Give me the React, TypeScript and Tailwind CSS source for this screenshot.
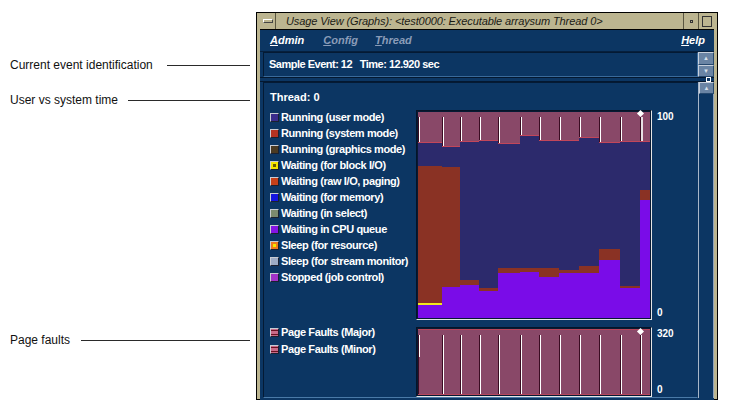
import React from "react";

type Col = { w: number; pink: number; blue: number; red: number; yellow?: number };

// y values in page pixels; the plot area runs from 112 to 318
const TOP = 112;
const BOTTOM = 318;
const cols: Col[] = [
  { w: 24, pink: 143, blue: 166, red: 303, yellow: 305 },
  { w: 18, pink: 147, blue: 167, red: 287 },
  { w: 19, pink: 142, blue: 280, red: 285 },
  { w: 19, pink: 141, blue: 288, red: 291 },
  { w: 22, pink: 144, blue: 268, red: 273 },
  { w: 19, pink: 136, blue: 268, red: 272 },
  { w: 20, pink: 141, blue: 268, red: 277 },
  { w: 20, pink: 141, blue: 270, red: 273 },
  { w: 20, pink: 138, blue: 266, red: 273 },
  { w: 21, pink: 143, blue: 249, red: 260 },
  { w: 20, pink: 142, blue: 286, red: 288 },
  { w: 10, pink: 142, blue: 190, red: 200 },
];

const legend = [
  { label: "Running (user mode)", sw: "bg-[#3a2c8c]" },
  { label: "Running (system mode)", sw: "bg-[#b43222]" },
  { label: "Running (graphics mode)", sw: "bg-[#4a3a22]" },
  { label: "Waiting (for block I/O)", sw: "bg-[#f2e400]", dot: "bg-[#6a5a00]" },
  { label: "Waiting (raw I/O, paging)", sw: "bg-[#c4401a]" },
  { label: "Waiting (for memory)", sw: "bg-[#1414e0]" },
  { label: "Waiting (in select)", sw: "bg-[#7c8a6e]" },
  { label: "Waiting in CPU queue", sw: "bg-[#8414e4]" },
  { label: "Sleep (for resource)", sw: "bg-[#f07a1c]", dot: "bg-[#f4e800]" },
  { label: "Sleep (for stream monitor)", sw: "bg-[#9cabc4]" },
  { label: "Stopped (job control)", sw: "bg-[#a232c8]" },
];

function Swatch({ sw, dot }: { sw: string; dot?: string }) {
  return (
    <span className="flex h-[9px] w-[9px] shrink-0 items-center justify-center border border-t-[#c8ccd4] border-l-[#c8ccd4] border-r-[#1a2030] border-b-[#1a2030]">
      <span className={`flex h-full w-full items-center justify-center ${sw}`}>
        {dot && <span className={`h-[3px] w-[3px] ${dot}`} />}
      </span>
    </span>
  );
}

function FaultSwatch() {
  return (
    <span className="flex h-[9px] w-[9px] shrink-0 flex-col justify-around border border-t-[#c8ccd4] border-l-[#c8ccd4] border-r-[#1a2030] border-b-[#1a2030] bg-[#c86a88]">
      <span className="h-px bg-[#6a1020]" />
      <span className="h-px bg-[#6a1020]" />
    </span>
  );
}

function Marker() {
  return <span className="absolute left-[-2px] top-[-1px] h-[5px] w-[5px] rotate-45 bg-white" />;
}

function UsageChart() {
  return (
    <div className="border-t border-l border-[#061428] border-r border-b border-r-[#e6e6e6] border-b-[#e6e6e6]">
      <div className="flex h-[208px] border border-[#071a34]">
        {cols.map((c, i) => {
          const last = c.yellow ?? c.red;
          return (
            <div key={i} className="flex flex-col" style={{ width: c.w }}>
              <div
                className="relative flex border-b border-[#c2465a] bg-[#894868] pt-[5px]"
                style={{ height: c.pink - TOP }}
              >
                <span className="w-px bg-[#3a0c22]" />
                <span className={i === 11 ? "w-[2px] bg-[#e8e0e4]" : "w-px bg-white"} />
                {i === 11 && <Marker />}
              </div>
              <div className="bg-[#2c2a6c]" style={{ height: c.blue - c.pink }} />
              <div className="bg-[#8a3224]" style={{ height: c.red - c.blue }} />
              {c.yellow && <div className="bg-[#f2e81c]" style={{ height: c.yellow - c.red }} />}
              <div className="bg-[#7a0ce8]" style={{ height: BOTTOM - last }} />
            </div>
          );
        })}
      </div>
    </div>
  );
}

function FaultChart() {
  return (
    <div className="border-t border-l border-[#061428] border-r border-b border-r-[#e6e6e6] border-b-[#e6e6e6]">
      <div className="flex h-[68px] border border-[#071a34]">
        {cols.map((c, i) => (
          <div
            key={i}
            className="relative flex border-y border-[#b8465c] bg-[#894868] pt-[5px]"
            style={{ width: c.w }}
          >
            <span className="w-px bg-[#3a0c22]" />
            <span className={i === 0 ? "h-[22px] w-px bg-white" : "w-px bg-white"} />
            {i === 11 && <Marker />}
          </div>
        ))}
      </div>
    </div>
  );
}

function Annotation({ text, gap, className }: { text: string; gap: string; className: string }) {
  return (
    <div className={`flex h-[16px] items-center ${className}`}>
      <span className="whitespace-nowrap text-[12px] text-[#111]">{text}</span>
      <span className={`h-px flex-1 bg-[#2a2a2a] ${gap}`} />
    </div>
  );
}

export default function App() {
  return (
    <div className="flex h-[410px] w-[729px] overflow-hidden bg-white font-['Liberation_Sans',Arial,sans-serif]">
      {/* callouts */}
      <div className="flex w-[256px] shrink-0 flex-col pl-[10px] pr-[6px] pt-[57px]">
        <Annotation text="Current event identification" gap="ml-[14px]" className="" />
        <Annotation text="User vs system time" gap="ml-[10px]" className="mt-[19px]" />
        <Annotation text="Page faults" gap="ml-[11px]" className="mt-[224px]" />
      </div>

      {/* window */}
      <div className="mt-[12px] flex h-[388px] w-[462px] shrink-0 flex-col border border-black bg-[#bcb590] px-[3px]">
        {/* title bar */}
        <div className="flex h-[17px] shrink-0 items-stretch border-b border-black">
          <div className="flex w-[16px] items-center justify-center border-r border-[#5a5640]">
            <span className="h-[4px] w-[10px] border border-t-white border-l-white border-b-[#444] border-r-[#444]" />
          </div>
          <div className="flex flex-1 items-center pl-[10px] text-[11px] italic tracking-[-0.1px] text-[#1a1a14]">
            Usage View (Graphs): &lt;test0000: Executable arraysum Thread 0&gt;
          </div>
          <div className="flex w-[15px] items-center justify-center border-l border-[#5a5640]">
            <span className="h-[3px] w-[3px] border border-[#333]" />
          </div>
          <div className="flex w-[16px] items-center justify-center border-l border-[#5a5640]">
            <span className="h-[11px] w-[10px] border border-[#333]" />
          </div>
        </div>

        {/* client area */}
        <div className="flex flex-1 flex-col bg-[#0c3663]">
          {/* menu bar */}
          <div className="flex h-[21px] shrink-0 items-center pl-[10px] pr-[9px] text-[11px] font-bold italic">
            <span className="text-white">
              <span className="underline">A</span>dmin
            </span>
            <span className="ml-[19px] text-[#8a9cb8]">
              <span className="underline">C</span>onfig
            </span>
            <span className="ml-[17px] text-[#8a9cb8]">
              <span className="underline">T</span>hread
            </span>
            <span className="ml-auto text-white">
              <span className="underline">H</span>elp
            </span>
          </div>

          {/* current event */}
          <div className="flex h-[26px] shrink-0 items-stretch border-t border-[#06203e] pl-[3px]">
            <div className="flex flex-1 items-center border border-t-[#041a34] border-l-[#041a34] border-b-[#3a6a9a] border-r-[#3a6a9a] pl-[5px] text-[11px] font-bold tracking-[-0.5px] text-white">
              Sample Event: 12&nbsp;&nbsp; Time: 12.920 sec
            </div>
            <div className="flex w-[16px] flex-col">
              <div className="flex flex-1 items-center justify-center border border-t-[#c8d0dc] border-l-[#c8d0dc] border-b-[#26486e] border-r-[#26486e] bg-[#6a84a4] text-[6px] leading-none text-[#d8e0ea]">
                ▲
              </div>
              <div className="flex flex-1 items-center justify-center border border-t-[#c8d0dc] border-l-[#c8d0dc] border-b-[#26486e] border-r-[#26486e] bg-[#6a84a4] text-[6px] leading-none text-[#d8e0ea]">
                ▼
              </div>
            </div>
          </div>

          {/* sash */}
          <div className="flex h-[5px] shrink-0 items-center justify-end border-y border-[#041830] pr-[3px]">
            <span className="h-[5px] w-[5px] border border-white" />
          </div>

          {/* graphs pane */}
          <div className="flex flex-1 items-stretch pb-[2px] pl-[3px]">
            <div className="flex flex-1 flex-col border border-t-[#041a34] border-l-[#041a34] border-b-[#4a7aa8] border-r-transparent pl-[6px] pt-[7px]">
              <div className="h-[14px] text-[11px] font-bold leading-[14px] text-white">Thread: 0</div>
              <div className="mt-[6px] flex items-start">
                <div className="-mt-px flex w-[146px] shrink-0 flex-col">
                  {legend.map((l) => (
                    <div key={l.label} className="flex h-[16px] items-center gap-[2px]">
                      <Swatch sw={l.sw} dot={l.dot} />
                      <span className="whitespace-nowrap text-[11px] font-bold tracking-[-0.4px] text-white">
                        {l.label}
                      </span>
                    </div>
                  ))}
                </div>
                <UsageChart />
                <div className="flex h-[210px] flex-col justify-between pb-px pl-[5px] pt-px text-[10px] font-bold leading-[12px] text-white">
                  <span>100</span>
                  <span>0</span>
                </div>
              </div>
              <div className="mt-[7px] flex items-start">
                <div className="-mt-[3px] flex w-[146px] shrink-0 flex-col">
                  {["Page Faults (Major)", "Page Faults (Minor)"].map((t) => (
                    <div key={t} className="flex h-[17px] items-center gap-[2px]">
                      <FaultSwatch />
                      <span className="whitespace-nowrap text-[11px] font-bold tracking-[-0.4px] text-white">
                        {t}
                      </span>
                    </div>
                  ))}
                </div>
                <FaultChart />
                <div className="flex h-[70px] flex-col justify-between pb-px pl-[5px] pt-px text-[10px] font-bold leading-[12px] text-white">
                  <span>320</span>
                  <span>0</span>
                </div>
              </div>
            </div>

            {/* vertical scrollbar */}
            <div className="flex w-[16px] shrink-0 flex-col border-l border-[#a8b6c8] bg-[#0c3663]">
              <div className="flex h-[12px] items-center justify-center border border-t-[#c8d0dc] border-l-[#c8d0dc] border-b-[#26486e] border-r-[#26486e] bg-[#6a84a4] text-[6px] leading-none text-[#d8e0ea]">
                ▲
              </div>
              <div className="flex-1 border-r border-[#8ea2bc]" />
            </div>
          </div>
        </div>
      </div>
    </div>
  );
}
